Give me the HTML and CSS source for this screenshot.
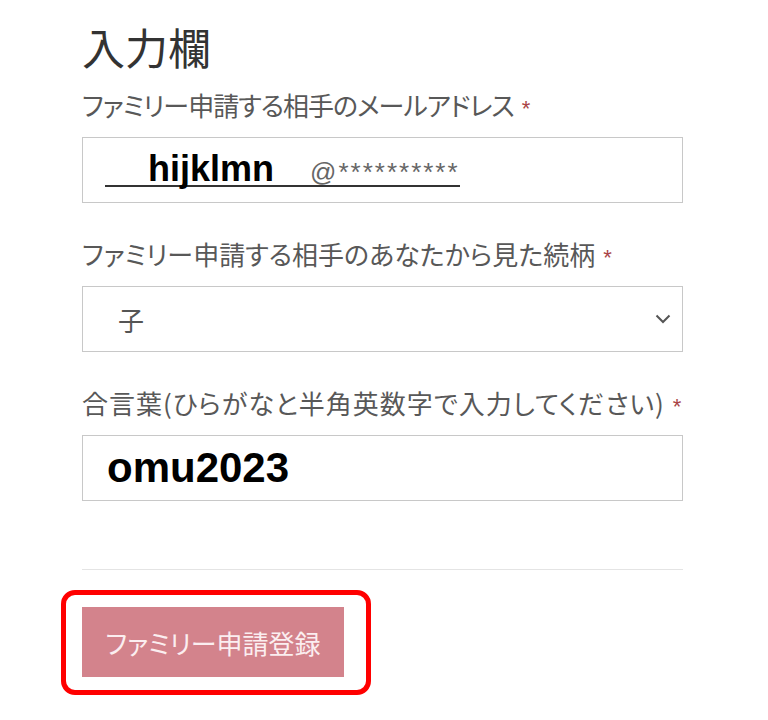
FILE: index.html
```html
<!doctype html>
<html lang="ja">

<head>
  <meta charset="UTF-8" />
  <meta name="viewport" content="width=device-width, initial-scale=1" />
  <title>ファミリー申請</title>
  <link rel="stylesheet" href="styles.css">
</head>

<body>
  <div class="container">
    <h1 class="section-title">入力欄</h1>

    <!-- メールアドレス -->
    <div class="form-group">
      <div class="form-label label-tight">ファミリー申請する相手のメールアドレス<span class="required">*</span></div>
      <div class="form-box">
        <span class="mail-line">
          <span class="mail-user">hijklmn</span>
          <span class="mail-domain">@**********</span>
        </span>
      </div>
    </div>

    <!-- 続柄 -->
    <div class="form-group">
      <div class="form-label">ファミリー申請する相手のあなたから見た続柄<span class="required">*</span></div>
      <div class="form-box select-box">
        <span class="select-value">子</span>
        <svg class="select-arrow" width="16" height="10" viewBox="0 0 16 10">
          <path d="M1.5 1.5 L8 8 L14.5 1.5" fill="none" stroke="#555" stroke-width="2" />
        </svg>
      </div>
    </div>

    <!-- 合言葉 -->
    <div class="form-group">
      <div class="form-label label-wide">合言葉(ひらがなと半角英数字で入力してください)<span class="required">*</span></div>
      <div class="form-box">
        <span class="pass-value">omu2023</span>
      </div>
    </div>

    <hr class="divider">

    <div class="highlight">
      <button class="submit-button">ファミリー申請登録</button>
    </div>
  </div>
</body>

</html>
```

FILE: styles.css
```css
body {
  margin: 0;
  background-color: white;
  font-family: "Noto Sans CJK JP", "Noto Sans", sans-serif;
  color: #333;
}

.container {
  width: 601px;
  padding: 20px 0 0 82px;
}

.section-title {
  font-size: 43px;
  font-weight: normal;
  line-height: 52px;
  margin: 0 0 16px 0;
  color: #333;
}

.form-group {
  margin-bottom: 34px;
}

.form-label {
  height: 34px;
  font-size: 26px;
  line-height: 34px;
  color: #585858;
  margin-bottom: 15px;
  font-feature-settings: "palt";
  white-space: nowrap;
}

.form-label.label-tight {
  letter-spacing: -1px;
}

.form-label.label-wide {
  letter-spacing: 1px;
}

.required {
  color: #a94446;
  margin-left: 8px;
  font-family: "Liberation Sans", sans-serif;
  font-size: 22px;
  line-height: 1;
  letter-spacing: 0;
}

.form-box {
  height: 66px;
  box-sizing: border-box;
  border: 1px solid #c8c8c8;
  display: flex;
  align-items: center;
  padding: 0 11px 0 22px;
  background-color: white;
}

.mail-line {
  display: inline-flex;
  align-items: baseline;
  padding-left: 43px;
  padding-top: 2px;
  line-height: 26px;
  border-bottom: 2px solid #333;
  font-family: "Liberation Sans", sans-serif;
}

.mail-user {
  font-size: 36px;
  font-weight: bold;
  color: black;
}

.mail-domain {
  font-size: 26px;
  letter-spacing: 2px;
  color: #666;
  margin-left: 36px;
}

.select-box {
  justify-content: space-between;
  padding-left: 35px;
}

.select-value {
  font-size: 26px;
  color: #555;
}

.pass-value {
  font-family: "Liberation Sans", sans-serif;
  font-size: 42px;
  font-weight: bold;
  line-height: 42px;
  color: black;
  margin-left: 2px;
}

.divider {
  border: none;
  border-top: 1px solid #e4e4e4;
  margin: 68px 0 20px;
}

.highlight {
  display: inline-block;
  margin-left: -21px;
  padding: 12px 22px 13px 16px;
  border: 5px solid #f00;
  border-radius: 14px;
}

.submit-button {
  display: block;
  width: 262px;
  height: 70px;
  border: none;
  background-color: #d3838c;
  color: #fbeef0;
  font-family: "Noto Sans CJK JP", sans-serif;
  font-size: 26px;
  font-feature-settings: "palt";
  padding: 0;
}
```
